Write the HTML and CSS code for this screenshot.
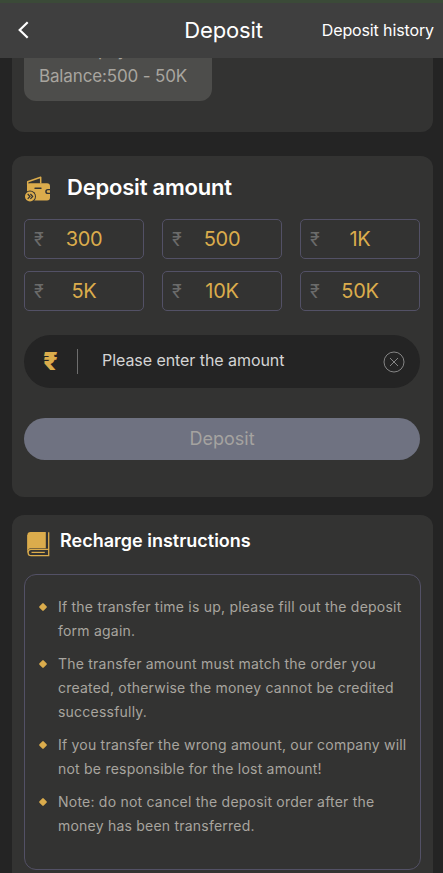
FILE: index.html
```html
<!DOCTYPE html>
<html lang="en">
<head>
    <meta charset="UTF-8">
    <title>Deposit</title>
    <link rel="stylesheet" href="styles.css">
</head>
<body>

<div id="page">
    <div class="header">
        <svg class="back" width="12" height="18" viewBox="0 0 12 18">
            <path d="M10.7 1.2L2.7 9l8 7.8" fill="none" stroke="#fff" stroke-width="2.2"/>
        </svg>
        <h1>Deposit</h1>
        <span class="history">Deposit history</span>
    </div>

    <div class="card channel">
        <div class="channel-item">
            <p>UPI-QRpay</p>
            <p>Balance:500 - 50K</p>
        </div>
    </div>

    <div class="card amount">
        <div class="title">
            <svg width="27" height="27" viewBox="0 0 27 27">
                <path d="M3.7 9V5.800L16.700 1.200V7.500" fill="none" stroke="#dbac4c" stroke-width="1.5" stroke-linejoin="round"/>
                <path d="M3 8c1-.7 2-.8 3-.8H23c2 0 3 1 3 3v2.700h-2.200a2.600 2.600 0 0 0 0 5.200H26V21.500c0 2-1 3-3 3H3z" fill="#dbac4c"/>
                <path d="M11 12.300h6" stroke="#333332" stroke-width="1.4" stroke-linecap="round"/>
                <path d="M26 14.200h-2a1.300 1.300 0 0 0 0 2.600h2z" fill="#dbac4c"/>
                <circle cx="6" cy="20.500" r="6" fill="#333332"/>
                <circle cx="6" cy="20.500" r="5" fill="#dbac4c"/>
                <path d="M3.700 18L6 20.500l-2.300 2.400M6.400 18l2.300 2.500-2.300 2.400" fill="none" stroke="#333332" stroke-width="1.2"/>
            </svg>
            <h2>Deposit amount</h2>
        </div>
        <ul class="money">
            <li><i>₹</i><span>300</span></li>
            <li><i>₹</i><span>500</span></li>
            <li><i>₹</i><span>1K</span></li>
            <li><i>₹</i><span>5K</span></li>
            <li><i>₹</i><span>10K</span></li>
            <li><i>₹</i><span>50K</span></li>
        </ul>
        <div class="input">
            <b>₹</b>
            <span class="line"></span>
            <span class="placeholder">Please enter the amount</span>
            <svg width="22" height="22" viewBox="0 0 22 22" fill="none" stroke="#858585">
                <circle cx="11" cy="11" r="10"/>
                <path d="M7 7l8 8M15 7l-8 8"/>
            </svg>
        </div>
        <div class="btn">Deposit</div>
    </div>

    <div class="card explain">
        <div class="title">
            <svg width="24" height="26" viewBox="0 0 24 26">
                <path d="M.4 4.200C.4 2 1.500 1 3.500 1H18.800V17.300H4C2.300 17.300 1.200 18 .4 19.200z" fill="#dbac4c"/>
                <path d="M21.700 1.300V18.300H4.300a3.200 3.200 0 0 0 0 6.400H21.700V18" fill="none" stroke="#dbac4c" stroke-width="1.3"/>
                <path d="M.9 4V21.500" stroke="#dbac4c" stroke-width="1.2"/>
                <path d="M4.500 21.400h13.300" stroke="#dbac4c" stroke-width="1.2"/>
            </svg>
            <h2>Recharge instructions</h2>
        </div>
        <ul class="rules">
            <li>If the transfer time is up, please fill out the deposit form again.</li>
            <li>The transfer amount must match the order you created, otherwise the money cannot be credited successfully.</li>
            <li>If you transfer the wrong amount, our company will not be responsible for the lost amount!</li>
            <li>Note: do not cancel the deposit order after the money has been transferred.</li>
        </ul>
    </div>
</div>

</body>
</html>
```

FILE: styles.css
```css
*{
    margin: 0;
    padding: 0;
    box-sizing: border-box;
}
ul{
    list-style: none;
}
i{
    font-style: normal;
}
svg{
    display: block;
    flex: none;
}
body{
    background: #242424;
    color: #fff;
    font-family: Inter, "Liberation Sans", sans-serif;
}

#page{
    height: 873px;
    overflow: hidden;
}
.header{
    height: 58px;
    padding: 0 9px 2px 17px;
    border-top: 3px solid #3b4a38;
    background: #3f3f3f;
    display: grid;
    grid-template-columns: 1fr auto 1fr;
    align-items: center;
}
.header h1{
    margin-right: 4px;
    font-size: 22px;
    font-weight: 400;
    letter-spacing: -.15px;
}
.header .history{
    font-size: 16px;
    letter-spacing: -.12px;
    justify-self: end;
    white-space: nowrap;
}

.card{
    margin: 0 10px 0 12px;
    border-radius: 12px;
    background: #333332;
}
.channel{
    height: 74px;
    padding-left: 12px;
    border-radius: 0 0 12px 12px;
}
.channel-item{
    width: 188px;
    height: 43px;
    padding: 0 15px 13px;
    border-radius: 0 0 12px 12px;
    background: #4d4d4b;
    color: #a8a59f;
    font-size: 17px;
    line-height: 24px;
    letter-spacing: -.15px;
    overflow: hidden;
    display: flex;
    flex-direction: column;
    justify-content: flex-end;
    gap: 2px;
}

.amount{
    height: 341px;
    margin-top: 24px;
    padding: 18px 13px 0 12px;
}
.title{
    display: flex;
}
.amount .title{
    height: 45px;
    gap: 16px;
}
.amount .title svg{
    margin-top: 2px;
}
.amount h2{
    font-size: 22px;
    line-height: 27px;
    font-weight: 600;
    letter-spacing: -.2px;
}
.money{
    display: grid;
    grid-template-columns: repeat(3, 120px);
    gap: 12px 18px;
}
.money li{
    height: 40px;
    padding-left: 9px;
    border: 1px solid #535166;
    border-radius: 5px;
    display: flex;
    align-items: center;
    color: #dbac4c;
    font-size: 20px;
    letter-spacing: -.3px;
}
.money i{
    width: 11px;
    color: #6b6b6a;
    font-size: 18px;
}
.money span{
    flex: 1;
    padding-right: 20px;
    text-align: center;
}
.input{
    height: 53px;
    margin-top: 24px;
    padding: 0 15px 0 19px;
    border-radius: 27px;
    background: #242424;
    display: flex;
    align-items: center;
}
.input b{
    width: 34px;
    padding-bottom: 2px;
    color: #dbac4c;
    font-size: 25px;
    font-weight: 900;
}
.input .line{
    width: 1px;
    height: 25px;
    background: #6e6e6e;
}
.input .placeholder{
    flex: 1;
    padding: 0 0 3px 24px;
    color: #d4d4d4;
    font-size: 16px;
    letter-spacing: -.06px;
}
.btn{
    height: 42px;
    margin-top: 30px;
    border-radius: 21px;
    background: #6f7281;
    color: #a5a3a0;
    font-size: 18px;
    line-height: 42px;
    text-align: center;
}

.explain{
    height: 400px;
    margin-top: 18px;
    padding: 16px 12px 0;
}
.explain .title{
    height: 43px;
    padding-left: 3px;
    gap: 9px;
}
.explain h2{
    font-size: 18px;
    line-height: 20px;
    font-weight: 600;
}
.rules{
    height: 296px;
    padding: 20px 10px 0 15px;
    border: 1px solid #535166;
    border-radius: 12px;
}
.rules li{
    position: relative;
    margin-bottom: 9px;
    padding-left: 18px;
    color: #a8a59f;
    font-size: 14px;
    line-height: 24px;
    letter-spacing: .22px;
}
.rules li:before{
    content: "";
    position: absolute;
    left: 0;
    top: 9px;
    width: 6px;
    height: 6px;
    border-radius: 1px;
    background: #dbac4c;
    transform: rotate(45deg);
}
```
